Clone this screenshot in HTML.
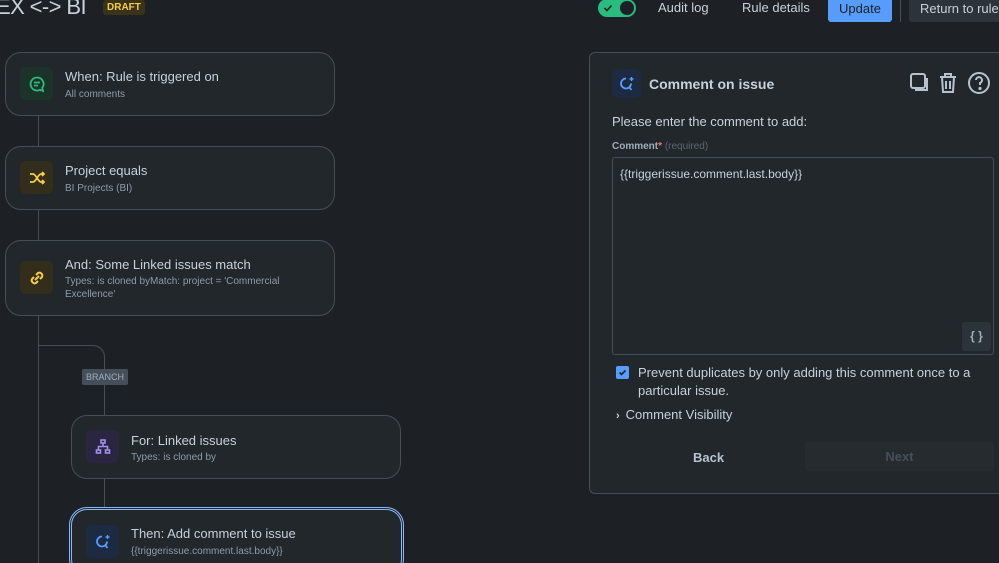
<!DOCTYPE html>
<html style="width:999px;height:563px;overflow:hidden"><head><meta charset="utf-8">
<style>
*{box-sizing:border-box;margin:0;padding:0}
body{width:999px;height:563px;overflow:hidden;background:#1d2125;font-family:"Liberation Sans",sans-serif;color:#b6c2cf;position:relative}
.abs{position:absolute}
.card{position:absolute;background:#22272b;border:1px solid #454f59;border-radius:16px}
.ic{position:absolute;width:33px;height:33px;border-radius:6px;display:flex;align-items:center;justify-content:center}
.t{position:absolute;font-size:13px;color:#c7d1db}
.s{position:absolute;font-size:10px;color:#8c9bab;line-height:13px}
.line{position:absolute;background:#454f59}
</style></head><body>
<div class="abs" style="left:-4px;top:-6px;font-size:22px;color:#c7d1db;letter-spacing:-0.6px;white-space:nowrap">EX &lt;-&gt; BI</div>
<div class="abs" style="left:103px;top:0;height:15px;padding:0 4px;background:#3a3318;color:#f5cd47;font-size:10px;font-weight:bold;line-height:15px;border-radius:3px">DRAFT</div>

<div class="abs" style="left:598px;top:-1px;width:38px;height:18px;border-radius:9px;background:#2abb7f"></div>
<div class="abs" style="left:620px;top:1px;width:14px;height:14px;border-radius:7px;background:#1d2125"></div>
<svg class="abs" style="left:603px;top:3px" width="10" height="10" viewBox="0 0 10 10"><path d="M1.5 5l2.5 2.5 4.5-5" fill="none" stroke="#1d2125" stroke-width="1.6"/></svg>
<div class="abs" style="left:658px;top:0;font-size:13px;color:#c7d1db">Audit log</div>
<div class="abs" style="left:742px;top:0;font-size:13px;color:#c7d1db">Rule details</div>
<div class="abs" style="left:828px;top:-6px;width:64px;height:28px;background:#579dff;border-radius:3px;color:#1d2125;font-size:13px;text-align:center;line-height:28px;padding-top:1px">Update</div>
<div class="line" style="left:900px;top:0;width:1px;height:22px"></div>
<div class="abs" style="left:909px;top:-6px;width:100px;height:28px;background:#2c333a;border-radius:3px;font-size:13px;color:#c7d1db;padding:7px 0 0 11px">Return to rules</div>

<div class="line" style="left:38px;top:115px;width:1px;height:448px"></div>
<div class="abs" style="left:38px;top:345px;width:67px;height:40px;border-top:1px solid #454f59;border-right:1px solid #454f59;border-top-right-radius:12px"></div>
<div class="line" style="left:104px;top:384px;width:1px;height:130px"></div>
<div class="abs" style="left:82px;top:369px;width:46px;height:16px;background:#454f59;border-radius:2px;font-size:9px;color:#9fadbc;text-align:center;line-height:16px">BRANCH</div>

<div class="card" style="left:5px;top:52px;width:330px;height:64px"></div>
<div class="ic" style="left:20px;top:67px;background:#1c3329"><svg width="18" height="18" viewBox="0 0 18 18" fill="none" stroke="#2abb7f" stroke-width="1.8"><path d="M9 2.5a6.5 6.5 0 1 0 3 12.3l3 1.2-.8-3A6.5 6.5 0 0 0 9 2.5z"/><path d="M6 7.5h6M6 10.5h4"/></svg></div>
<div class="t" style="left:65px;top:69px">When: Rule is triggered on</div>
<div class="s" style="left:65px;top:88px">All comments</div>

<div class="card" style="left:5px;top:146px;width:330px;height:64px"></div>
<div class="ic" style="left:20px;top:161px;background:#332e1b"><svg width="18" height="18" viewBox="0 0 18 18" fill="none" stroke="#f5cd47" stroke-width="1.8"><path d="M2 5h3c3 0 5 8 8 8h3M2 13h3c3 0 5-8 8-8h3M14 3l2 2-2 2M14 11l2 2-2 2"/></svg></div>
<div class="t" style="left:65px;top:163px">Project equals</div>
<div class="s" style="left:65px;top:182px">BI Projects (BI)</div>

<div class="card" style="left:5px;top:240px;width:330px;height:76px"></div>
<div class="ic" style="left:20px;top:261px;background:#332e1b"><svg width="18" height="18" viewBox="0 0 18 18" fill="none" stroke="#f5cd47" stroke-width="2"><path d="M8 6l2-2a3 3 0 0 1 4 4l-2 2M10 12l-2 2a3 3 0 0 1-4-4l2-2M7 11l4-4"/></svg></div>
<div class="t" style="left:65px;top:257px">And: Some Linked issues match</div>
<div class="s" style="left:65px;top:275px;width:250px">Types: is cloned byMatch: project = 'Commercial Excellence'</div>

<div class="card" style="left:71px;top:415px;width:330px;height:64px"></div>
<div class="ic" style="left:86px;top:430px;background:#2b2540"><svg width="18" height="18" viewBox="0 0 18 18" fill="none" stroke="#9f8fef" stroke-width="1.6"><rect x="7" y="2" width="4" height="3"/><rect x="2.5" y="12" width="4" height="3"/><rect x="11.5" y="12" width="4" height="3"/><path d="M9 5v3.5M4.5 12V8.5h9V12"/></svg></div>
<div class="t" style="left:131px;top:433px">For: Linked issues</div>
<div class="s" style="left:131px;top:451px">Types: is cloned by</div>

<div class="card" style="left:69px;top:507px;width:335px;height:70px;border:3px double #85b8ff;border-radius:18px"></div>
<div class="ic" style="left:86px;top:525px;background:#1c2b41"><svg width="18" height="18" viewBox="0 0 18 18" fill="none" stroke="#579dff" stroke-width="1.8"><path d="M13 8.5A5 5 0 1 1 8 3.5M11.5 12.5l2 2.5"/><path d="M13.5 2v4M11.5 4h4" stroke-width="1.4"/></svg></div>
<div class="t" style="left:131px;top:526px">Then: Add comment to issue</div>
<div class="s" style="left:131px;top:545px">{{triggerissue.comment.last.body}}</div>

<div class="abs" style="left:589px;top:52px;width:420px;height:442px;background:#22272b;border:1px solid #454f59;border-radius:6px"></div>
<div class="ic" style="left:612px;top:69px;width:29px;height:29px;background:#1c2b41"><svg width="18" height="18" viewBox="0 0 18 18" fill="none" stroke="#579dff" stroke-width="1.8"><path d="M13 8.5A5 5 0 1 1 8 3.5M11.5 12.5l2 2.5"/><path d="M13.5 2v4M11.5 4h4" stroke-width="1.4"/></svg></div>
<div class="abs" style="left:649px;top:76px;font-size:14px;font-weight:bold;color:#c7d1db">Comment on issue</div>
<svg class="abs" style="left:909px;top:71px" width="85" height="24" viewBox="0 0 85 24" fill="none" stroke="#b6c2cf" stroke-width="2"><rect x="2" y="3" width="14" height="14" rx="2"/><path d="M18 7v12H6"/><path d="M31 6h16M36 6V3h6v3M33 6l1 15h10l1-15M37 10v8M41 10v8"/><circle cx="70" cy="12" r="10"/><path d="M67 9a3 3 0 1 1 4 3v2"/><circle cx="71" cy="17.5" r="0.6" fill="#b6c2cf"/></svg>
<div class="abs" style="left:612px;top:114px;font-size:13px;color:#c7d1db">Please enter the comment to add:</div>
<div class="abs" style="left:612px;top:141px;font-size:10px;font-weight:bold;color:#9fadbc">Comment<span style="color:#f87168">*</span> <span style="color:#596773;font-weight:normal">(required)</span></div>
<div class="abs" style="left:612px;top:157px;width:382px;height:198px;background:#22272b;border:1px solid #454f59;border-radius:3px"></div>
<div class="abs" style="left:620px;top:167px;font-size:12px;color:#c7d1db">{{triggerissue.comment.last.body}}</div>
<div class="abs" style="left:962px;top:322px;width:29px;height:29px;background:#2c333a;border-radius:3px;font-size:12px;font-weight:bold;color:#9fadbc;text-align:center;line-height:29px">{ }</div>
<div class="abs" style="left:616px;top:366px;width:13px;height:13px;background:#579dff;border-radius:2px"><svg width="13" height="13" viewBox="0 0 13 13"><path d="M3.5 6.5l2 2 4-4" fill="none" stroke="#1d2125" stroke-width="1.6"/></svg></div>
<div class="abs" style="left:638px;top:364px;width:350px;font-size:13px;line-height:18px;color:#c7d1db">Prevent duplicates by only adding this comment once to a particular issue.</div>
<div class="abs" style="left:616px;top:407px;font-size:13px;color:#c7d1db"><span style="font-size:11px;font-weight:bold;margin-right:6px">›</span>Comment Visibility</div>
<div class="abs" style="left:693px;top:450px;font-size:13px;font-weight:bold;color:#b6c2cf">Back</div>
<div class="abs" style="left:805px;top:442px;width:189px;height:29px;background:#262b30;border-radius:3px;font-size:13px;font-weight:bold;color:#454f59;text-align:center;line-height:29px">Next</div>
</body></html>
